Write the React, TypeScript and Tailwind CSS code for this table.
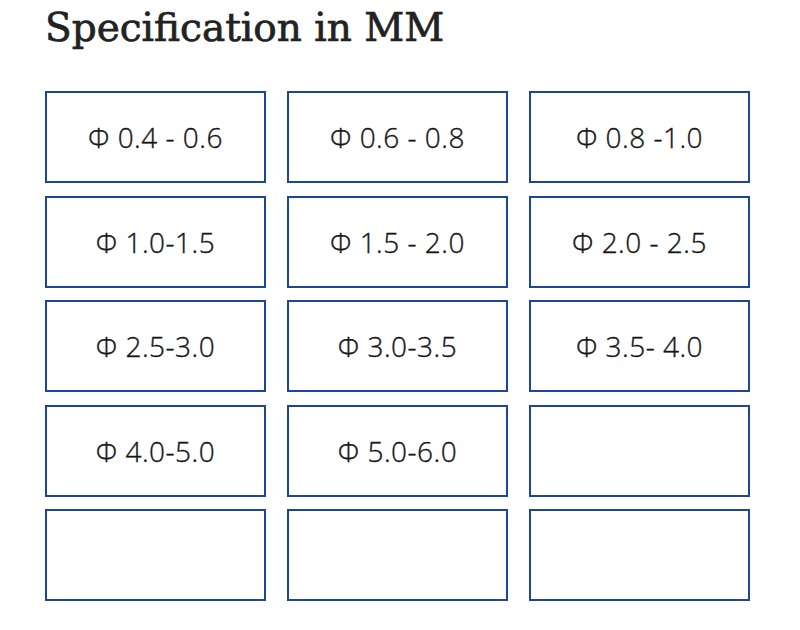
const specs = [
  "Φ 0.4 - 0.6",
  "Φ 0.6 - 0.8",
  "Φ 0.8 -1.0",
  "Φ 1.0-1.5",
  "Φ 1.5 - 2.0",
  "Φ 2.0 - 2.5",
  "Φ 2.5-3.0",
  "Φ 3.0-3.5",
  "Φ 3.5- 4.0",
  "Φ 4.0-5.0",
  "Φ 5.0-6.0",
  "",
  "",
  "",
  "",
];

export default function App() {
  return (
    <div className="w-[800px] h-[630px] bg-white pl-[45px] pt-[5px] overflow-hidden">
      <h1 className="font-['DejaVu_Serif',serif] text-[39px] leading-[46px] text-[#222] [-webkit-text-stroke:0.7px_#222]">
        Specification in MM
      </h1>
      <div className="mt-[40px] grid grid-cols-[221px_221px_221px] gap-x-[21px] gap-y-[12.5px]">
        {specs.map((s, i) => (
          <div
            key={i}
            className="h-[92px] border-2 border-[#1b469a] flex items-center justify-center font-['Open_Sans',sans-serif] text-[28px] tracking-[0.5px] font-light text-[#161616] [-webkit-text-stroke:0.35px_#161616]"
          >
            {s}
          </div>
        ))}
      </div>
    </div>
  );
}
